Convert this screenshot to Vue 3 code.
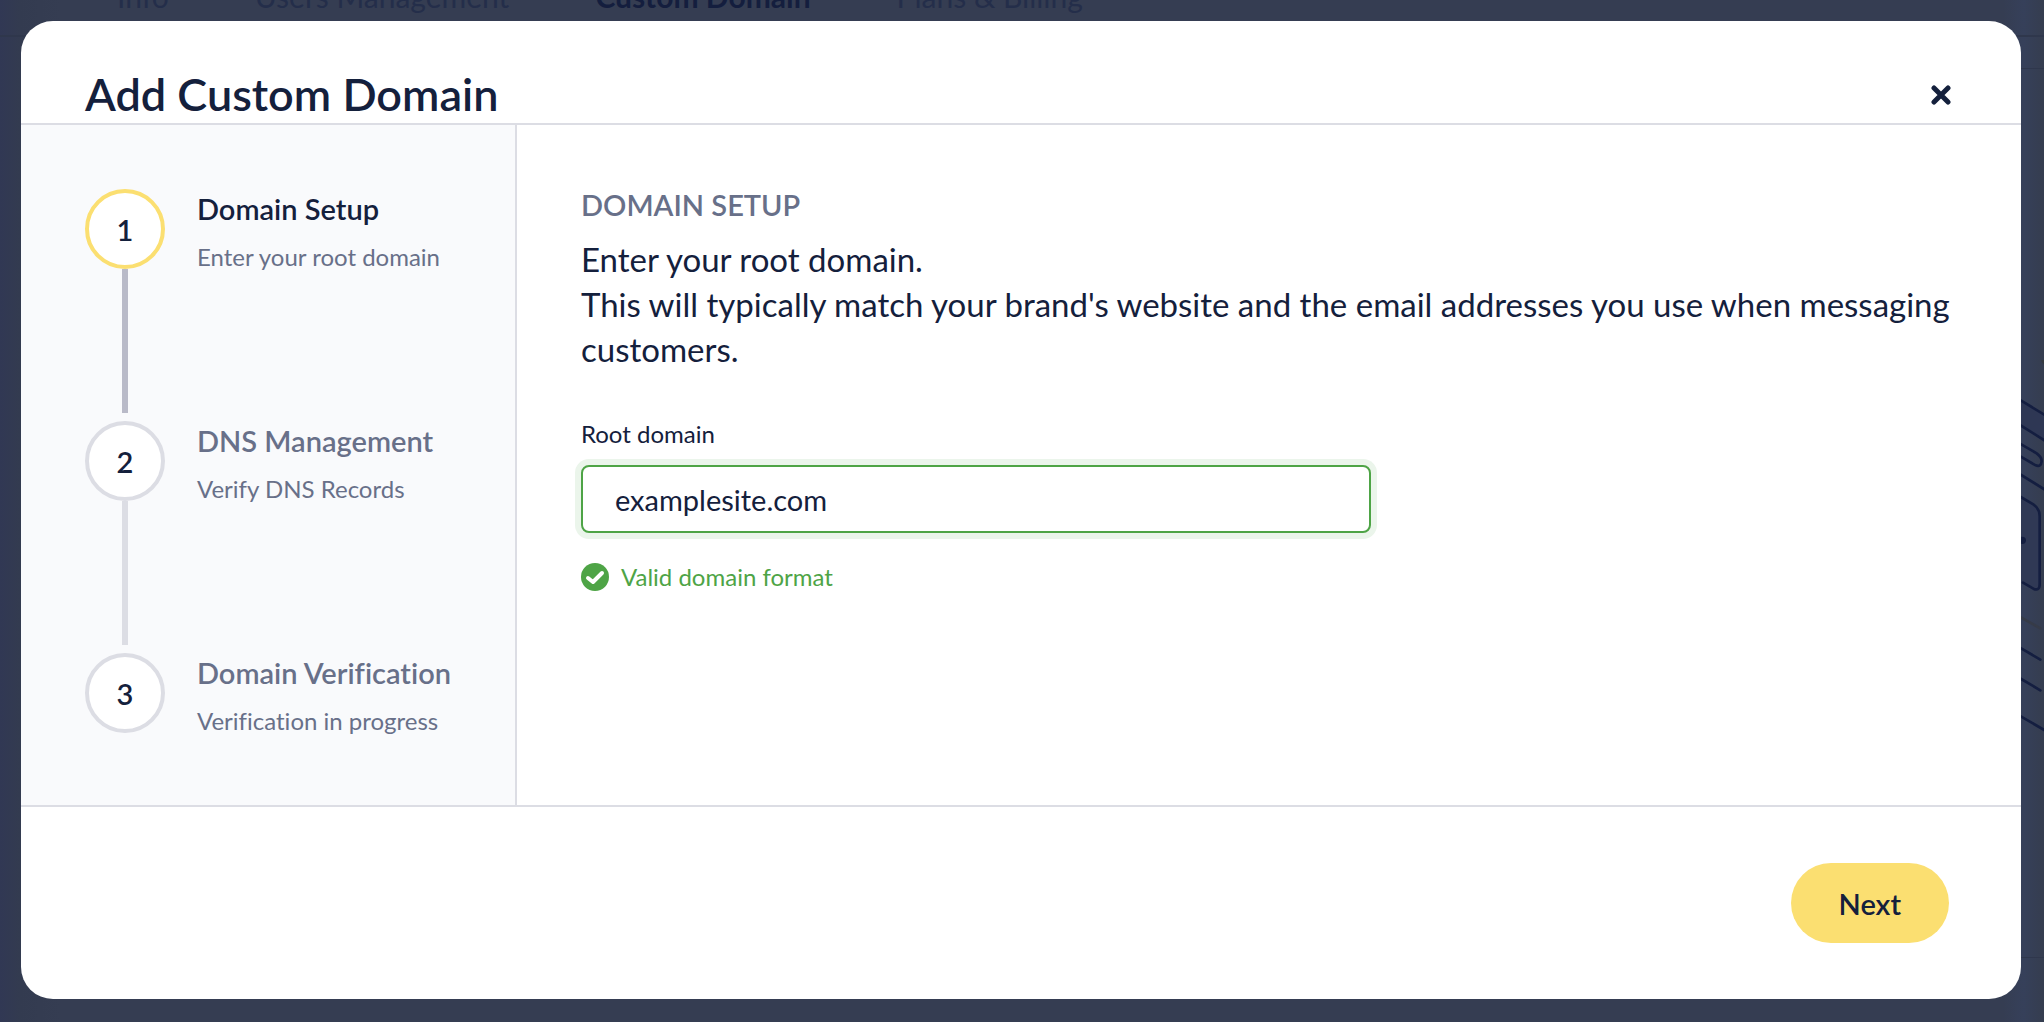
<script setup>
import { ref, computed } from 'vue'

const tabs = ['Info', 'Users Management', 'Custom Domain', 'Plans & Billing']
const activeTab = 'Custom Domain'

const steps = [
  { id: 1, title: 'Domain Setup', text: 'Enter your root domain' },
  { id: 2, title: 'DNS Management', text: 'Verify DNS Records' },
  { id: 3, title: 'Domain Verification', text: 'Verification in progress' }
]

const isOpen = ref(true)
const currentStep = ref(1)
const rootDomain = ref('examplesite.com')

const current = computed(() => steps.find((step) => step.id === currentStep.value))
const isValid = computed(() => /^([a-z0-9-]+\.)+[a-z]{2,}$/i.test(rootDomain.value))

const next = () => {
  if (isValid.value && currentStep.value < steps.length) {
    currentStep.value++
  }
}
</script>

<template>
  <div class="page">
    <nav class="tabs">
      <a v-for="tab in tabs"
        :key="tab"
        href="#"
        class="tab"
        :class="{ active: tab === activeTab }">{{ tab }}</a>
    </nav>
    <div class="panel"></div>

    <svg class="artwork" viewBox="111 0 69 1260" fill="none" aria-hidden="true">
      <path d="M111 122L180 163V240L111 197Z" fill="#2e3754" />
      <path d="M111 412L150 435Q167 446 167 468V675Q167 697 148 686L111 668Z" fill="#303955" />
      <g stroke="#141e40" stroke-width="8" stroke-linecap="round">
        <path d="M105 118L186 167M105 193L186 244M105 341L186 391" />
        <path d="M105 249L158 280Q173 291 173 304Q171 322 155 316L105 287" />
        <path d="M105 408L148 433Q167 446 167 468V673Q167 694 148 686L117 668" />
        <path d="M105 861L169 899M105 953L169 991M105 1066L186 1113" />
      </g>
      <path d="M105 769L169 805" stroke="#363b48" stroke-width="8" stroke-linecap="round" />
      <circle cx="186" cy="0" r="14" fill="#34393f" />
      <circle cx="115" cy="541" r="11" fill="#141e40" />
    </svg>

    <div v-if="isOpen" class="overlay">
      <section class="modal" role="dialog" aria-modal="true" aria-labelledby="modal-title">
        <header class="modal-header">
          <h1 id="modal-title">Add Custom Domain</h1>
          <button type="button" class="close" aria-label="Close" @click="isOpen = false">
            <svg viewBox="0 0 20 20" aria-hidden="true">
              <path d="M3 3L17 17M17 3L3 17" stroke="currentColor" stroke-width="5" stroke-linecap="round" />
            </svg>
          </button>
        </header>

        <div class="modal-body">
          <ol class="steps">
            <li v-for="step in steps"
              :key="step.id"
              class="step"
              :class="{ active: step.id === currentStep }">
              <div class="marker">
                <span class="number">{{ step.id }}</span>
                <span v-if="step.id < steps.length" class="line"></span>
              </div>
              <div class="step-text">
                <h2>{{ step.title }}</h2>
                <p>{{ step.text }}</p>
              </div>
            </li>
          </ol>

          <form class="content" @submit.prevent="next">
            <h3>{{ current.title }}</h3>
            <p class="intro">
              Enter your root domain.<br>
              This will typically match your brand's website and the email addresses you use when messaging customers.
            </p>
            <label for="root-domain">Root domain</label>
            <input id="root-domain" v-model="rootDomain" type="text" :class="{ valid: isValid }">
            <p v-if="isValid" class="message">
              <svg viewBox="0 0 28 28" aria-hidden="true">
                <circle cx="14" cy="14" r="14" fill="currentColor" />
                <path d="M7 15L12 19L21 10" fill="none" stroke="#fff" stroke-width="4" stroke-linecap="round" stroke-linejoin="round" />
              </svg>
              Valid domain format
            </p>
          </form>
        </div>

        <footer class="modal-footer">
          <button type="button" class="next" @click="next">Next</button>
        </footer>
      </section>
    </div>
  </div>
</template>

<style>
body {
  margin: 0;
  background: #343c52;
}
</style>

<style scoped>
.page {
  position: relative;
  display: flex;
  flex-direction: column;
  min-height: 100vh;
  overflow: hidden;
  font-family: Lato, "Liberation Sans", sans-serif;
  font-variant-ligatures: none;
  color: #14203c;
  background: linear-gradient(90deg, #313854 0, #333b50 20px, #353d52 60px, #353d52 98%, #36405a 99%, #353d4f 100%);
}

h1, h2, h3, p, ol {
  margin: 0;
  padding: 0;
}

.tabs {
  display: flex;
  gap: 86px;
  margin-top: -22px;
  padding-left: 117px;
  height: 57px;
  border-bottom: 2px solid #2f374c;
}

.tab {
  font-size: 30px;
  line-height: 36px;
  color: #242e4a;
  text-decoration: none;
}

.tab.active {
  color: #141e3e;
  font-weight: 700;
}

.panel {
  flex: 1;
  margin: 31px 0 64px 54px;
  border: 1px solid #2f374c;
  border-right: 0;
}

.artwork {
  position: absolute;
  top: 360px;
  right: 0;
  width: 23px;
  height: 420px;
}

.overlay {
  position: absolute;
  inset: 0;
  display: flex;
  box-sizing: border-box;
  padding: 21px 23px 23px 21px;
}

.modal {
  flex: 1;
  display: flex;
  flex-direction: column;
  background: #fff;
  border-radius: 32px;
  overflow: hidden;
}

.modal-header {
  display: flex;
  align-items: center;
  justify-content: space-between;
  padding: 46px 64px 0;
  border-bottom: 2px solid #dcdde4;
}

.modal-header h1 {
  padding-bottom: 2px;
  font-size: 45px;
  font-weight: 600;
  line-height: 54px;
}

.close {
  display: flex;
  padding: 6px;
  border: 0;
  background: none;
  color: #14203c;
  cursor: pointer;
}

.close svg {
  width: 20px;
  height: 20px;
}

.modal-body {
  flex: 1;
  display: flex;
}

.steps {
  flex: none;
  box-sizing: border-box;
  width: 496px;
  padding: 64px 32px 0 64px;
  list-style: none;
  background: #f9fafc;
  border-right: 2px solid #dcdde4;
}

.step {
  display: flex;
  gap: 32px;
}

.marker {
  display: flex;
  flex-direction: column;
  align-items: center;
  width: 80px;
}

.number {
  display: flex;
  align-items: center;
  justify-content: center;
  box-sizing: border-box;
  width: 80px;
  height: 80px;
  border: 4px solid #dcdde4;
  border-radius: 50%;
  background: #fff;
  font-size: 29px;
  font-weight: 600;
}

.line {
  width: 6px;
  height: 144px;
  margin-bottom: 8px;
  background: #dcdde4;
}

.step.active .number {
  border-color: #fbdf71;
}

.step.active .line {
  background: #b9bac8;
}

.step-text {
  color: #687089;
}

.step-text h2 {
  font-size: 29px;
  font-weight: 600;
  line-height: 40px;
}

.step-text p {
  margin-top: 10px;
  font-size: 24px;
  line-height: 36px;
}

.step.active h2 {
  color: #14203c;
}

.content {
  flex: 1;
  display: flex;
  flex-direction: column;
  align-items: flex-start;
  padding: 60px 64px;
}

.content h3 {
  font-size: 29px;
  font-weight: 600;
  line-height: 40px;
  color: #687089;
  text-transform: uppercase;
}

.intro {
  margin-top: 12px;
  font-size: 33px;
  line-height: 45px;
}

.content label {
  margin-top: 44px;
  font-size: 24px;
  line-height: 36px;
}

.content input {
  box-sizing: border-box;
  width: 100%;
  max-width: 790px;
  height: 68px;
  margin-top: 13px;
  padding: 0 32px;
  border: 2px solid #b9bac8;
  border-radius: 8px;
  outline: none;
  font: inherit;
  font-variant-ligatures: none;
  font-size: 29px;
  color: #14203c;
}

.content input.valid {
  border-color: #4ea446;
  box-shadow: 0 0 0 6px #ebf5eb;
}

.message {
  display: flex;
  align-items: center;
  gap: 12px;
  margin-top: 26px;
  font-size: 24px;
  line-height: 36px;
  color: #4ea446;
}

.message svg {
  width: 28px;
  height: 28px;
}

.modal-footer {
  display: flex;
  justify-content: flex-end;
  padding: 56px 72px;
  border-top: 2px solid #dcdde4;
}

.next {
  height: 80px;
  padding: 0 48px;
  border: 0;
  border-radius: 40px;
  background: #fbdf71;
  color: #14203c;
  font: inherit;
  font-size: 29px;
  font-weight: 600;
  cursor: pointer;
}
</style>
